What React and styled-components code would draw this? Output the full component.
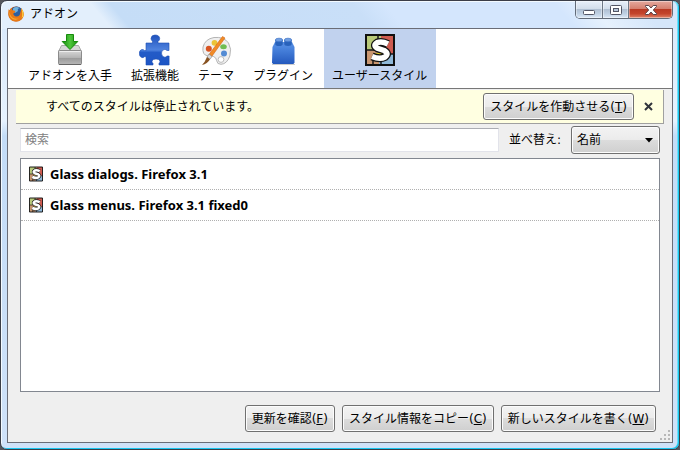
import React from 'react';

import styled, { createGlobalStyle } from 'styled-components';

const GlobalStyle = createGlobalStyle`
  * {
    box-sizing: border-box;
  }

  body {
    margin: 0;
    background: #55565c;
    color: #000;
    font: 12px/18px 'DejaVu Sans', 'Noto Sans CJK JP', sans-serif;
  }

  button,
  input,
  select {
    font: inherit;
    color: inherit;
    margin: 0;
  }
`;

const Window = styled.div`
  display: flex;
  flex-direction: column;
  min-height: 100vh;
  padding: 0 6px 6px;
  border: 1px solid #3b3e48;
  border-radius: 7px;
  background:
    linear-gradient(50deg, #fff0 82%, #e6f1fd 87%, #d5e6fa 94%) top / 100% 28px no-repeat,
    linear-gradient(50deg, #e3effc 0, #e3effc 85px, #c5ddf7 100px, #c9dff8 285px, #d4e6fd 310px) top / 100% 28px no-repeat,
    linear-gradient(#d7e8fb 0, #e6f2fe 120px, #c3dcf7 135px, #cfe2f9 100%);
  box-shadow:
    inset -1px -1px 0 #18c6f0,
    inset -2px 0 0 #6fe0fa,
    inset 1px 1px 0 #f3faff;
`;

const TitleBar = styled.header`
  display: flex;
  align-items: flex-start;
  height: 27px;
  padding-left: 1px;
`;

const WindowTitle = styled.h1`
  display: flex;
  flex: 1;
  align-items: center;
  gap: 6px;
  margin: 4px 0 0;
  font-size: 12px;
  font-weight: 400;
`;

const WindowControls = styled.div`
  display: flex;
  border: 1px solid #626b78;
  border-top: 0;
  border-radius: 0 0 5px 5px;
  overflow: hidden;
`;

const ControlButton = styled.button`
  display: flex;
  align-items: center;
  justify-content: center;
  width: ${({ $close }) => ($close ? 44 : 26)}px;
  height: 17px;
  padding: 1px 0 0;
  border: 0;
  border-left: ${({ $first }) => ($first ? '0' : '1px solid #6e7886')};
  background: ${({ $close }) =>
    $close
      ? 'linear-gradient(#e5a99e 0, #d5806f 45%, #b93a24 50%, #c4452c 75%, #e08368 100%)'
      : 'linear-gradient(#e8f0fa 0, #d3deeb 45%, #b0c0d3 50%, #bfd0e3 75%, #dbe8f6 100%)'};
  box-shadow: inset 0 0 0 1px #ffffff66;
`;

const Frame = styled.main`
  display: flex;
  flex: 1;
  flex-direction: column;
  border: 1px solid #6a6d77;
  background: #efefef;
`;

const Toolbar = styled.nav`
  display: flex;
  gap: 2px;
  height: 60px;
  padding-left: 12px;
  border-bottom: 1px solid #777;
  background: #fff;
`;

const Tab = styled.button`
  display: flex;
  flex-direction: column;
  align-items: center;
  gap: 1px;
  padding: 5px 9px 0 8px;
  border: 0;
  background: ${({ $active }) => ($active ? '#c1d2ee' : 'transparent')};
  white-space: nowrap;

  svg {
    flex: none;
  }
`;

const Notification = styled.div`
  display: flex;
  align-items: center;
  margin: 1px 8px 0;
  padding: 3px 8px 3px 30px;
  border: solid #a0a0a0;
  border-width: 0 1px 1px 0;
  background: #ffffe1;
`;

const Message = styled.p`
  flex: 1;
  margin: 0;
`;

const PushButton = styled.button`
  height: 27px;
  padding: 0 6px;
  border: 1px solid #707070;
  border-radius: 3px;
  background: linear-gradient(#f3f3f3 0, #ebebeb 50%, #dcdcdc 50%, #cfcfcf 100%);
  box-shadow: inset 0 0 0 1px #fcfcfc;
  white-space: nowrap;
`;

const DismissButton = styled.button`
  display: flex;
  margin-left: 8px;
  padding: 2px;
  border: 0;
  background: none;
`;

const Content = styled.section`
  display: flex;
  flex: 1;
  flex-direction: column;
  gap: 4px;
  padding: 2px 12px 0;
`;

const FilterRow = styled.div`
  display: flex;
  align-items: center;
`;

const SearchBox = styled.input`
  flex: 1;
  min-width: 0;
  height: 24px;
  padding: 0 4px;
  border: 1px solid #e2e3ea;
  border-top-color: #abadb3;
  background: #fff;

  &::placeholder {
    color: #808080;
    opacity: 1;
  }
`;

const SortLabel = styled.label`
  margin: 0 10px;
`;

const SelectBox = styled.span`
  display: grid;
  align-items: center;
  width: 89px;

  > * {
    grid-area: 1 / 1;
  }

  svg {
    justify-self: end;
    margin-right: 7px;
    pointer-events: none;
  }
`;

const Select = styled(PushButton).attrs({ as: 'select' })`
  width: 100%;
  height: 28px;
  padding: 0 5px;
  appearance: none;
`;

const StyleList = styled.ul`
  flex: 1;
  margin: 0;
  padding: 0;
  border: 1px solid #828790;
  background: #fff;
  list-style: none;
`;

const StyleItem = styled.li`
  display: flex;
  align-items: center;
  gap: 7px;
  height: 31px;
  padding-left: 8px;
  border-bottom: 1px dotted #b0b0b0;
  font-family: 'Noto Sans', sans-serif;
  font-size: 13px;
  font-weight: 700;
`;

const Footer = styled.footer`
  display: grid;
  grid-template-columns: 1fr auto;
  padding: 13px 4px 0 12px;
`;

const Actions = styled.div`
  display: flex;
  justify-content: flex-end;
  gap: 7px;
  padding-bottom: 10px;
`;

const Grip = styled.svg`
  align-self: end;
  margin: 0 -2px 2px 4px;
`;

const FirefoxIcon = () => (
  <svg width="16" height="16" viewBox="0 0 16 16" aria-hidden="true">
    <circle cx="8" cy="8" r="7.6" fill="#b94a10" />
    <circle cx="8.6" cy="6.6" r="6" fill="#2c5f9e" />
    <path d="M5 2.5Q8 0 11.5 2 9 3 10 5L7 7 5 5Z" fill="#70b1dc" />
    <path d="M.6 3.2 1.6 4.2Q2.4 2.4 4 1.8L4.1 4 7.4 4.9 6.8 6.5 5.3 7.4Q5.5 10 8.4 10.4 12 10.5 12.2 7L13.4 2.2Q16.8 6.5 15.2 11 13.2 15.4 8.4 15.6 3 15.7 1 11-.2 7.5.6 3.2Z" fill="#e87916" />
    <path d="M13.3 2.2Q16.5 5.8 15.1 10.5L13.6 12.2Q15 7.5 13.3 2.2Z" fill="#ffd23e" />
    <path d="M1.2 5Q1.8 10 5 12 8 13.5 11 12.3 8 15 4.2 12.8 1 10.4 1.2 5Z" fill="#f9ae32" />
  </svg>
);

const GetAddonsIcon = () => (
  <svg width="32" height="32" viewBox="0 0 32 32" aria-hidden="true">
    <defs>
      <linearGradient id="tray" x2="0" y2="1">
        <stop stopColor="#d8d8d8" />
        <stop offset=".5" stopColor="#b5b5b5" />
        <stop offset=".52" stopColor="#989898" />
        <stop offset="1" stopColor="#b8b8b8" />
      </linearGradient>
      <linearGradient id="arrow">
        <stop stopColor="#128b0b" />
        <stop offset=".5" stopColor="#4fc63c" />
        <stop offset="1" stopColor="#149009" />
      </linearGradient>
    </defs>
    <path d="M7.5 11.5h17l3 6H4.5Z" fill="#d6d6d6" stroke="#aaa" />
    <rect x="4.5" y="16.5" width="23" height="14" rx="1" fill="url(#tray)" stroke="#8b8b8b" />
    <path d="M5.5 17.5h21" stroke="#eee" />
    <path d="M5 30.5h22" stroke="#666" />
    <path d="M12.5.5h7v7h4.3L16 15.5 8.2 7.5h4.3Z" fill="url(#arrow)" stroke="#168b0c" />
  </svg>
);

const ExtensionsIcon = () => (
  <svg width="32" height="32" viewBox="0 0 32 32" aria-hidden="true">
    <defs>
      <linearGradient id="puzzle" x2="0" y2="1">
        <stop stopColor="#1f52bd" />
        <stop offset=".5" stopColor="#4f83df" />
        <stop offset=".58" stopColor="#235bc7" />
        <stop offset="1" stopColor="#1d55c5" />
      </linearGradient>
    </defs>
    <path
      d="M7 9h6.5V7.2Q12 6 12 4.5 12.2 1 16 1q4.5 0 4.7 3.7 0 1.5-1.7 2.8V9h11v7.5h-2q-1.3-1.3-2.8-1-2.7.7-2.7 3.6 0 3.2 2.6 4 1.5.4 3-1.1h2V31H20v-1.7q1.3-1 1-2.3-.7-2-4-2t-4 2q-.4 1.3 1 2.3V31H7v-8.3H5.5Q4.2 24 2.8 23.6.3 22.8.3 19.5t2.5-4q1.4-.4 2.7 1H7Z"
      fill="url(#puzzle)"
      stroke="#1d4fb4"
      strokeWidth=".6"
    />
  </svg>
);

const ThemesIcon = () => (
  <svg width="32" height="32" viewBox="0 0 32 32" aria-hidden="true">
    <path
      d="M3 13Q5 5 14 3.5 24 2.5 28.5 9q3.5 6 1.3 13Q27 30 21 30.3q-4 0-4.3-3.5-.2-3.3-3.5-4.5-2.5-.7-5.7-.5Q2 21 3 13Z"
      fill="#efefef"
      stroke="#b5b5b5"
    />
    <circle cx="21" cy="25.5" r="2.9" fill="#fff" stroke="#bbb" />
    <circle cx="8.8" cy="14.7" r="3" fill="#d85422" />
    <circle cx="14.5" cy="8.8" r="2.9" fill="#ebc437" />
    <ellipse cx="23.5" cy="12.7" rx="3.3" ry="2.5" fill="#70bd53" />
    <circle cx="24" cy="19.5" r="3" fill="#538bd4" />
    <path d="M22.5 2.5 25 4 11.7 22.5 9 20.5Z" fill="#f28b25" stroke="#d26712" strokeWidth=".6" />
    <path d="m9 20 3 2.5-2 2.8-3-2.2Z" fill="#d9d9d9" stroke="#777" strokeWidth=".5" />
    <path d="m7 23 3 2.2Q7.5 30 2 31q3-3 5-8Z" fill="#885322" />
  </svg>
);

const PluginsIcon = () => (
  <svg width="32" height="32" viewBox="0 0 32 32" aria-hidden="true">
    <defs>
      <linearGradient id="brick" x2="0" y2="1">
        <stop stopColor="#5a8fe2" />
        <stop offset=".25" stopColor="#4c86df" />
        <stop offset="1" stopColor="#2459bd" />
      </linearGradient>
    </defs>
    <path d="M5.5 13 8 8h17l2.5 5v15.5l-1 1.5H6l-1-1.5Z" fill="url(#brick)" />
    {[12, 21].map(cx => (
      <g key={cx}>
        <path d={`M${cx - 3.7} 6v4a3.7 2 0 0 0 7.4 0V6Z`} fill="#2862bb" />
        <ellipse cx={cx} cy="6" rx="3.7" ry="1.8" fill="#6f9de0" stroke="#3970c5" strokeWidth=".7" />
      </g>
    ))}
    <path d="M5 30.5h23" stroke="#ccc" />
  </svg>
);

const StylishIcon = ({ size = 32 }) => (
  <svg width={size === 32 ? 30 : 14} height={size} viewBox="0 0 30 32" aria-hidden="true">
    <path d="M1 1h15v15H1Z" fill="#b8c979" />
    <path d="M16 1h13v19H16Z" fill="#ce5b50" />
    <path d="M1 16h15v15H1Z" fill="#c99670" />
    <path d="M14 20h15v11H14Z" fill="#8fb8d8" />
    <path d="M10 19h7v6h-7Z" fill="#e9d42a" />
    <path d="M13 1v5M1 16h8M16 25v6M20 20h9M8 23v8" stroke="#171717" strokeWidth="1.5" />
    <path
      d="M23 10Q17 6.8 12.2 8.6 7.5 11.4 12.5 14.3L19 16.5q5.5 3.2 1 6.5-5 2.7-13-.5"
      fill="none"
      stroke="#111"
      strokeWidth="8"
    />
    <path
      d="M23 10Q17 6.8 12.2 8.6 7.5 11.4 12.5 14.3L19 16.5q5.5 3.2 1 6.5-5 2.7-13-.5"
      fill="none"
      stroke="#fff"
      strokeWidth="5.5"
    />
    <path d="M1 1h28v30H1Z" fill="none" stroke="#101010" strokeWidth="2" />
  </svg>
);

const MinimizeIcon = () => (
  <svg width="13" height="12" aria-hidden="true">
    <rect x=".5" y="6.5" width="11" height="4" rx="1" fill="#fff" stroke="#535666" />
  </svg>
);

const MaximizeIcon = () => (
  <svg width="12" height="11" aria-hidden="true">
    <rect x=".5" y=".5" width="11" height="9" rx="1" fill="#fff" stroke="#535666" />
    <rect x="3.5" y="3.5" width="5" height="3" fill="#b7c7da" stroke="#535666" />
  </svg>
);

const CloseIcon = () => (
  <svg width="12" height="11" aria-hidden="true">
    <path d="M.5.5h3.3L6 3 8.2.5h3.3v1L8.3 5l3.2 3.5v1H8.2L6 7 3.8 9.5H.5v-1L3.7 5 .5 1.5Z" fill="#fff" stroke="#5b454a" />
  </svg>
);

const tabs = [
  { label: 'アドオンを入手', Icon: GetAddonsIcon },
  { label: '拡張機能', Icon: ExtensionsIcon },
  { label: 'テーマ', Icon: ThemesIcon },
  { label: 'プラグイン', Icon: PluginsIcon },
  { label: 'ユーザースタイル', Icon: StylishIcon, active: true },
];

const userStyles = ['Glass dialogs. Firefox 3.1', 'Glass menus. Firefox 3.1 fixed0'];

const actions = [
  { label: '更新を確認', hotkey: 'F' },
  { label: 'スタイル情報をコピー', hotkey: 'C' },
  { label: '新しいスタイルを書く', hotkey: 'W' },
];

const KeyButton = ({ label, hotkey }) => (
  <PushButton type="button" accessKey={hotkey}>
    {label}(<u>{hotkey}</u>)
  </PushButton>
);

const App = () => (
  <>
    <GlobalStyle />
    <Window>
      <TitleBar>
        <WindowTitle>
          <FirefoxIcon />
          アドオン
        </WindowTitle>
        <WindowControls>
          <ControlButton type="button" aria-label="最小化" $first>
            <MinimizeIcon />
          </ControlButton>
          <ControlButton type="button" aria-label="最大化">
            <MaximizeIcon />
          </ControlButton>
          <ControlButton type="button" aria-label="閉じる" $close>
            <CloseIcon />
          </ControlButton>
        </WindowControls>
      </TitleBar>
      <Frame>
        <Toolbar>
          {tabs.map(({ label, Icon, active }) => (
            <Tab key={label} type="button" $active={active} aria-pressed={!!active}>
              <Icon />
              {label}
            </Tab>
          ))}
        </Toolbar>
        <Notification role="status">
          <Message>すべてのスタイルは停止されています。</Message>
          <KeyButton label="スタイルを作動させる" hotkey="T" />
          <DismissButton type="button" aria-label="通知を閉じる">
            <svg width="9" height="9" aria-hidden="true">
              <path d="m1 1 7 7M8 1 1 8" stroke="#30343c" strokeWidth="2" />
            </svg>
          </DismissButton>
        </Notification>
        <Content>
          <FilterRow>
            <SearchBox type="search" placeholder="検索" aria-label="検索" />
            <SortLabel htmlFor="sort">並べ替え:</SortLabel>
            <SelectBox>
              <Select id="sort">
                <option>名前</option>
              </Select>
              <svg width="8" height="5" aria-hidden="true">
                <path d="M0 0h8L4 4.5Z" />
              </svg>
            </SelectBox>
          </FilterRow>
          <StyleList>
            {userStyles.map(name => (
              <StyleItem key={name}>
                <StylishIcon size={16} />
                {name}
              </StyleItem>
            ))}
          </StyleList>
        </Content>
        <Footer>
          <Actions>
            {actions.map(action => (
              <KeyButton key={action.hotkey} {...action} />
            ))}
          </Actions>
          <Grip width="10" height="10" aria-hidden="true">
            <path d="M8 0h2v2H8ZM4 4h2v2H4ZM8 4h2v2H8ZM0 8h2v2H0ZM4 8h2v2H4ZM8 8h2v2H8Z" fill="#b8b8b8" />
          </Grip>
        </Footer>
      </Frame>
    </Window>
  </>
);

export default App;
